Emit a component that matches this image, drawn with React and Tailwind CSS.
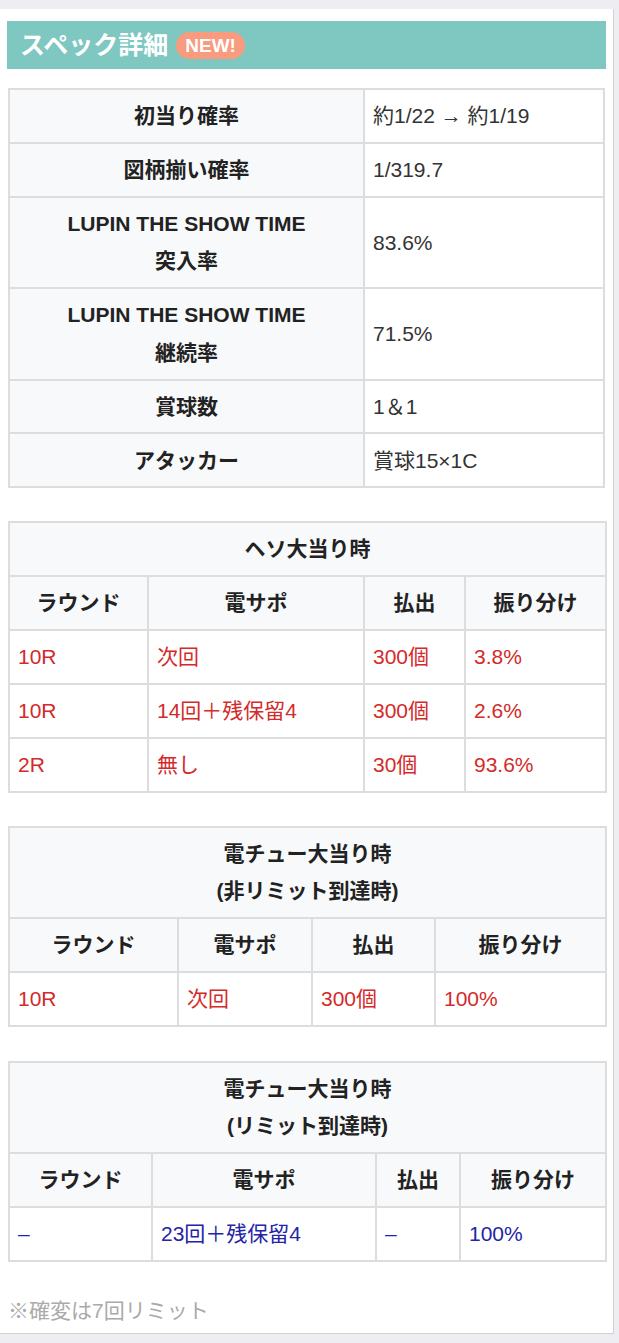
import React from "react";

const RED = "text-[#d42a2a]";
const BLUE = "text-[#2424a6]";

const thBase =
  "border-2 border-[#dddddd] bg-[#f8f9fa] text-[#222222] font-bold text-center px-[8px] py-[7.2px] leading-[37.5px]";
const tdBase =
  "border-2 border-[#dddddd] bg-white text-left px-[8px] py-[7.2px] leading-[37.5px]";

function SpecTable() {
  const rows = [
    ["初当り確率", "約1/22 → 約1/19"],
    ["図柄揃い確率", "1/319.7"],
    [
      <>
        LUPIN THE SHOW TIME
        <br />
        突入率
      </>,
      "83.6%",
    ],
    [
      <>
        LUPIN THE SHOW TIME
        <br />
        継続率
      </>,
      "71.5%",
    ],
    ["賞球数", "1＆1"],
    ["アタッカー", "賞球15×1C"],
  ];
  return (
    <table className="w-[597px] ml-px border-collapse table-fixed">
      <colgroup>
        <col className="w-[355px]" />
        <col />
      </colgroup>
      <tbody>
        {rows.map((r, i) => (
          <tr key={i}>
            <th className={thBase}>{r[0]}</th>
            <td className={`${tdBase} text-[#333333]`}>{r[1]}</td>
          </tr>
        ))}
      </tbody>
    </table>
  );
}

function RoundTable({ title, widths, rows, color }) {
  return (
    <table className="w-[597px] ml-px border-collapse table-fixed">
      <colgroup>
        {widths.map((w, i) => (
          <col key={i} style={{ width: w }} />
        ))}
      </colgroup>
      <thead>
        <tr>
          <th colSpan={4} className={thBase}>
            {title}
          </th>
        </tr>
        <tr>
          <th className={thBase}>ラウンド</th>
          <th className={thBase}>電サポ</th>
          <th className={thBase}>払出</th>
          <th className={thBase}>振り分け</th>
        </tr>
      </thead>
      <tbody>
        {rows.map((r, i) => (
          <tr key={i}>
            {r.map((c, j) => (
              <td key={j} className={`${tdBase} ${color}`}>
                {c}
              </td>
            ))}
          </tr>
        ))}
      </tbody>
    </table>
  );
}

export default function App() {
  return (
    <div
      className="min-h-screen bg-[#ededf2] pt-[9px] text-[21px]"
      style={{ fontFamily: '"Liberation Sans", "Noto Sans CJK JP", sans-serif' }}
    >
      <div className="w-[614px] bg-white border-r border-b border-[#cfcfd4] px-[7px] pt-[12px] pb-[6px]">
        <div className="h-[48px] bg-[#7fc7c1] flex items-center pl-[13px]">
          <span className="text-white font-bold text-[25px] leading-none">
            スペック詳細
          </span>
          <span className="ml-[8px] h-[27px] px-[9px] rounded-full bg-[#f89b7e] text-white font-bold text-[19px] leading-[27px] flex items-center">
            NEW!
          </span>
        </div>

        <div className="mt-[19px]">
          <SpecTable />
        </div>

        <div className="mt-[33px]">
          <RoundTable
            title="ヘソ大当り時"
            widths={["139px", "216px", "101px", "141px"]}
            color={RED}
            rows={[
              ["10R", "次回", "300個", "3.8%"],
              ["10R", "14回＋残保留4", "300個", "2.6%"],
              ["2R", "無し", "30個", "93.6%"],
            ]}
          />
        </div>

        <div className="mt-[33px]">
          <RoundTable
            title={
              <>
                電チュー大当り時
                <br />
                (非リミット到達時)
              </>
            }
            widths={["169px", "134px", "123px", "171px"]}
            color={RED}
            rows={[["10R", "次回", "300個", "100%"]]}
          />
        </div>

        <div className="mt-[34px]">
          <RoundTable
            title={
              <>
                電チュー大当り時
                <br />
                (リミット到達時)
              </>
            }
            widths={["143px", "224px", "84px", "146px"]}
            color={BLUE}
            rows={[["–", "23回＋残保留4", "–", "100%"]]}
          />
        </div>

        <div className="mt-[33px] pl-[1px] text-[#aaaaaa] leading-[32px]">
          ※確変は7回リミット
        </div>
      </div>
    </div>
  );
}
